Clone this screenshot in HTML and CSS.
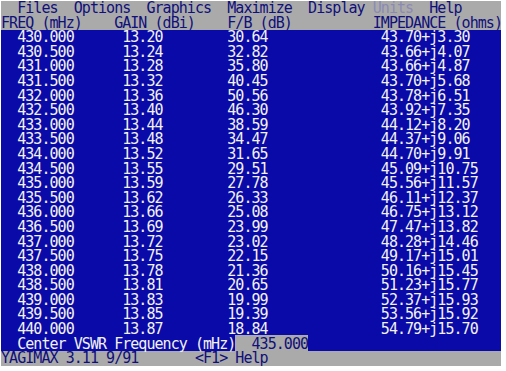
FILE: index.html
```html
<!DOCTYPE html>
<html>
<head>
<meta charset="utf-8">
<link rel="stylesheet" href="styles.css">
</head>
<body>
<div class="screen">
  <div class="bar top">
    <div class="row menu">  Files  Options  Graphics  Maximize  Display <span class="dim">Units</span>  Help</div>
    <div class="row">FREQ (mHz)    GAIN (dBi)    F/B (dB)          IMPEDANCE (ohms)</div>
  </div>
  <div class="data">
    <div class="row">  430.000      13.20        30.64              43.70+j3.30</div>
    <div class="row">  430.500      13.24        32.82              43.66+j4.07</div>
    <div class="row">  431.000      13.28        35.80              43.66+j4.87</div>
    <div class="row">  431.500      13.32        40.45              43.70+j5.68</div>
    <div class="row">  432.000      13.36        50.56              43.78+j6.51</div>
    <div class="row">  432.500      13.40        46.30              43.92+j7.35</div>
    <div class="row">  433.000      13.44        38.59              44.12+j8.20</div>
    <div class="row">  433.500      13.48        34.47              44.37+j9.06</div>
    <div class="row">  434.000      13.52        31.65              44.70+j9.91</div>
    <div class="row">  434.500      13.55        29.51              45.09+j10.75</div>
    <div class="row">  435.000      13.59        27.78              45.56+j11.57</div>
    <div class="row">  435.500      13.62        26.33              46.11+j12.37</div>
    <div class="row">  436.000      13.66        25.08              46.75+j13.12</div>
    <div class="row">  436.500      13.69        23.99              47.47+j13.82</div>
    <div class="row">  437.000      13.72        23.02              48.28+j14.46</div>
    <div class="row">  437.500      13.75        22.15              49.17+j15.01</div>
    <div class="row">  438.000      13.78        21.36              50.16+j15.45</div>
    <div class="row">  438.500      13.81        20.65              51.23+j15.77</div>
    <div class="row">  439.000      13.83        19.99              52.37+j15.93</div>
    <div class="row">  439.500      13.85        19.39              53.56+j15.92</div>
    <div class="row">  440.000      13.87        18.84              54.79+j15.70</div>
    <div class="row">  Center VSWR Frequency (mHz)<span class="field">  435.000</span></div>
  </div>
  <div class="bar bottom">
    <div class="row">YAGIMAX 3.11 9/91       &lt;F1&gt; Help</div>
  </div>
</div>
</body>
</html>
```

FILE: styles.css
```css
html, body {
  margin: 0;
  padding: 0;
  background: #ffffff;
}

.screen {
  margin: 1px 0 0 1px;
  width: 500px;
  font-family: "DejaVu Sans Mono", "Liberation Mono", monospace;
  font-size: 15px;
  letter-spacing: -0.95px;
}

.row {
  height: 14.6px;
  line-height: 14.6px;
  white-space: pre;
}

.bar {
  background: #aaaaaa;
  color: #10107a;
}

.data {
  background: #0a0aa8;
  color: #f2f2f2;
}

.dim {
  color: #8a8ab4;
}

.field {
  background: #aaaaaa;
  color: #10107a;
}
```
